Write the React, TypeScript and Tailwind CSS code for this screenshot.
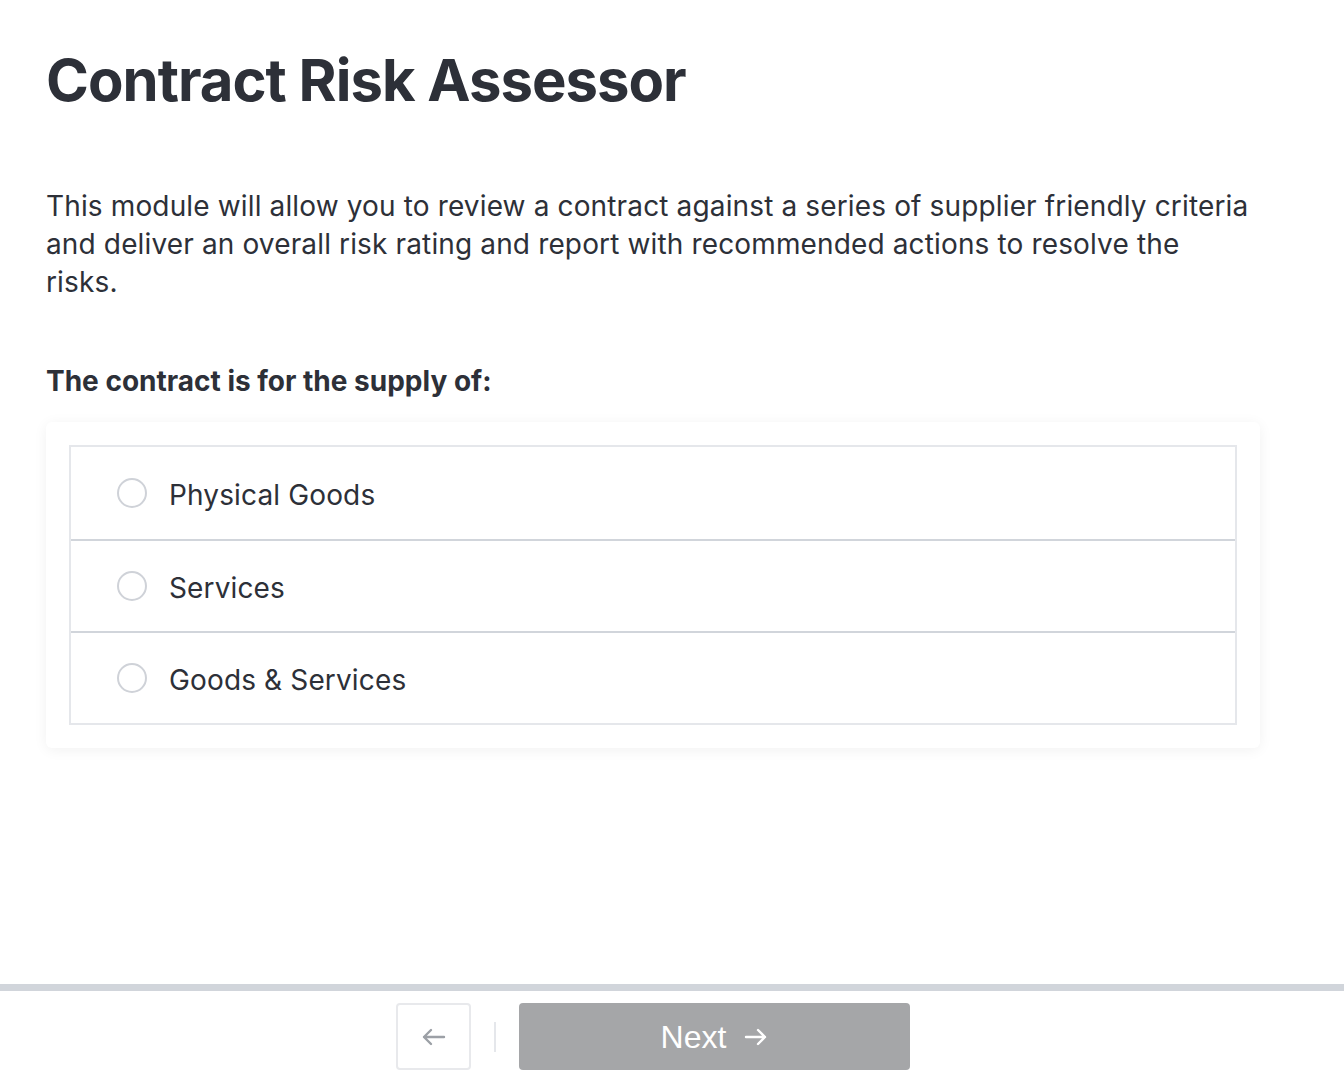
import React from 'react';

const options = ['Physical Goods', 'Services', 'Goods & Services'];

export default function App() {
  const [selected, setSelected] = React.useState<string | null>(null);

  return (
    <div className="min-h-screen flex flex-col bg-white text-[#2d3038] font-['Inter',sans-serif]">
      <main className="flex-1 px-[46px] pt-[46px]">
        <h1 className="text-[58px] leading-[68px] font-bold tracking-[-0.017em]">Contract Risk Assessor</h1>

        <p className="mt-[73px] max-w-[1212px] text-[28px] leading-[38px] tracking-[0.005em]">
          This module will allow you to review a contract against a series of supplier friendly criteria and deliver an
          overall risk rating and report with recommended actions to resolve the risks.
        </p>

        <h2 className="mt-[61px] text-[28px] leading-[38px] font-bold">The contract is for the supply of:</h2>

        <div className="mt-[22px] w-[1214px] bg-white rounded-md shadow-[0_2px_14px_rgba(0,0,0,0.06)] p-[23px]">
          <div className="border-2 border-[#e5e7eb]">
            {options.map((opt, i) => (
              <button
                key={opt}
                onClick={() => setSelected(opt)}
                className={
                  'w-full h-[92px] flex items-center gap-[22px] pl-[46px] text-left ' +
                  (i > 0 ? 'border-t-2 border-[#d1d5db]' : '')
                }
              >
                <span className="w-[30px] h-[30px] rounded-full border-2 border-[#cfd2d8] flex items-center justify-center">
                  {selected === opt && <span className="w-[14px] h-[14px] rounded-full bg-[#2d3038]" />}
                </span>
                <span className="text-[28px] leading-[34px] pt-[4px] tracking-[0.005em]">{opt}</span>
              </button>
            ))}
          </div>
        </div>
      </main>

      <footer className="border-t-[7px] border-[#d1d5db] pt-[12px] pb-[10px]">
        <div className="flex items-center pl-[396px]">
          <button className="w-[75px] h-[67px] rounded border-2 border-[#e8e9ec] flex items-center justify-center text-[#9ca0a6]">
            <svg width="26" height="20" viewBox="0 0 26 20" fill="none" stroke="currentColor" strokeWidth="2.4" strokeLinecap="round" strokeLinejoin="round">
              <path d="M23 10H3M10 3 3 10l7 7" />
            </svg>
          </button>
          <span className="mx-[23px] w-[2px] h-[30px] bg-[#e5e7eb]" />
          <button className="w-[391px] h-[67px] rounded bg-[#a5a6a8] text-white flex items-center justify-center gap-[18px]">
            <span className="text-[32px] font-['Liberation_Sans',Arial,sans-serif]">Next</span>
            <svg width="24" height="20" viewBox="0 0 24 20" fill="none" stroke="currentColor" strokeWidth="2.4" strokeLinecap="round" strokeLinejoin="round">
              <path d="M2 10h19M14 3l7 7-7 7" />
            </svg>
          </button>
        </div>
      </footer>
    </div>
  );
}
